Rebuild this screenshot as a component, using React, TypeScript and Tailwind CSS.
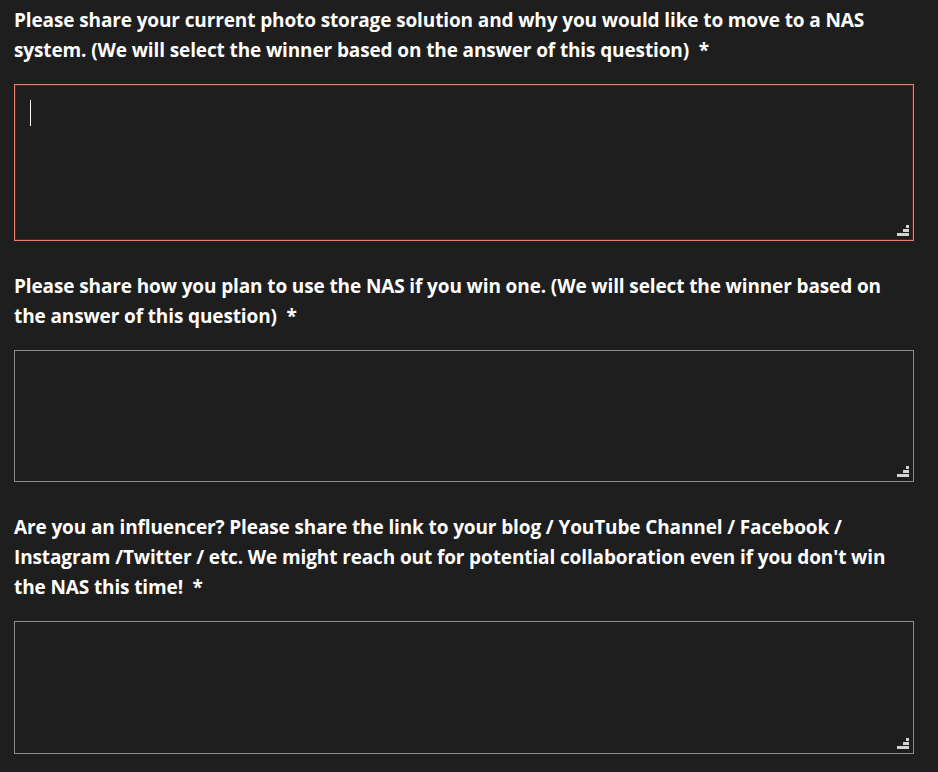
import React from 'react';

interface FieldProps {
    label: string;
    height: string;
    active?: boolean;
}

const Grip: React.FC = () => (
    <svg width="14" height="12" viewBox="0 0 14 12" className="absolute right-[3px] bottom-[3px]" fill="#d4d4d4">
        <rect x="10" y="0" width="3" height="3" />
        <rect x="7" y="4" width="3" height="3" />
        <rect x="10" y="4" width="3" height="3" />
        <rect x="1" y="8" width="3" height="3" />
        <rect x="4" y="8" width="3" height="3" />
        <rect x="7" y="8" width="3" height="3" />
        <rect x="10" y="8" width="3" height="3" />
    </svg>
);

const Field: React.FC<FieldProps> = ({ label, height, active }) => (
    <div className="flex flex-col w-[900px]">
        <p className="w-[898px] text-[19px] leading-[30px] font-bold text-white tracking-[-0.12px]">
            {label}&nbsp; *
        </p>
        <div
            className={`relative mt-[19px] w-[900px] ${height} bg-[#1e1e1e] border ${
                active ? 'border-[#e8806f] shadow-[inset_0_0_0_1px_#5a1f1a]' : 'border-[#8c8c8c]'
            }`}
        >
            {active && <span className="absolute left-[15px] top-[15px] w-px h-[26px] bg-white" />}
            <Grip />
        </div>
    </div>
);

export default function App() {
    return (
        <div
            className="min-h-screen w-full bg-[#1e1e1e] pl-[14px] pt-[5px] flex flex-col gap-[30px]"
            style={{ fontFamily: '"Open Sans", "Liberation Sans", sans-serif' }}
        >
            <Field
                label="Please share your current photo storage solution and why you would like to move to a NAS system. (We will select the winner based on the answer of this question)"
                height="h-[157px]"
                active
            />
            <Field
                label="Please share how you plan to use the NAS if you win one. (We will select the winner based on the answer of this question)"
                height="h-[132px]"
            />
            <Field
                label="Are you an influencer? Please share the link to your blog / YouTube Channel / Facebook / Instagram /Twitter / etc. We might reach out for potential collaboration even if you don't win the NAS this time!"
                height="h-[133px]"
            />
        </div>
    );
}
